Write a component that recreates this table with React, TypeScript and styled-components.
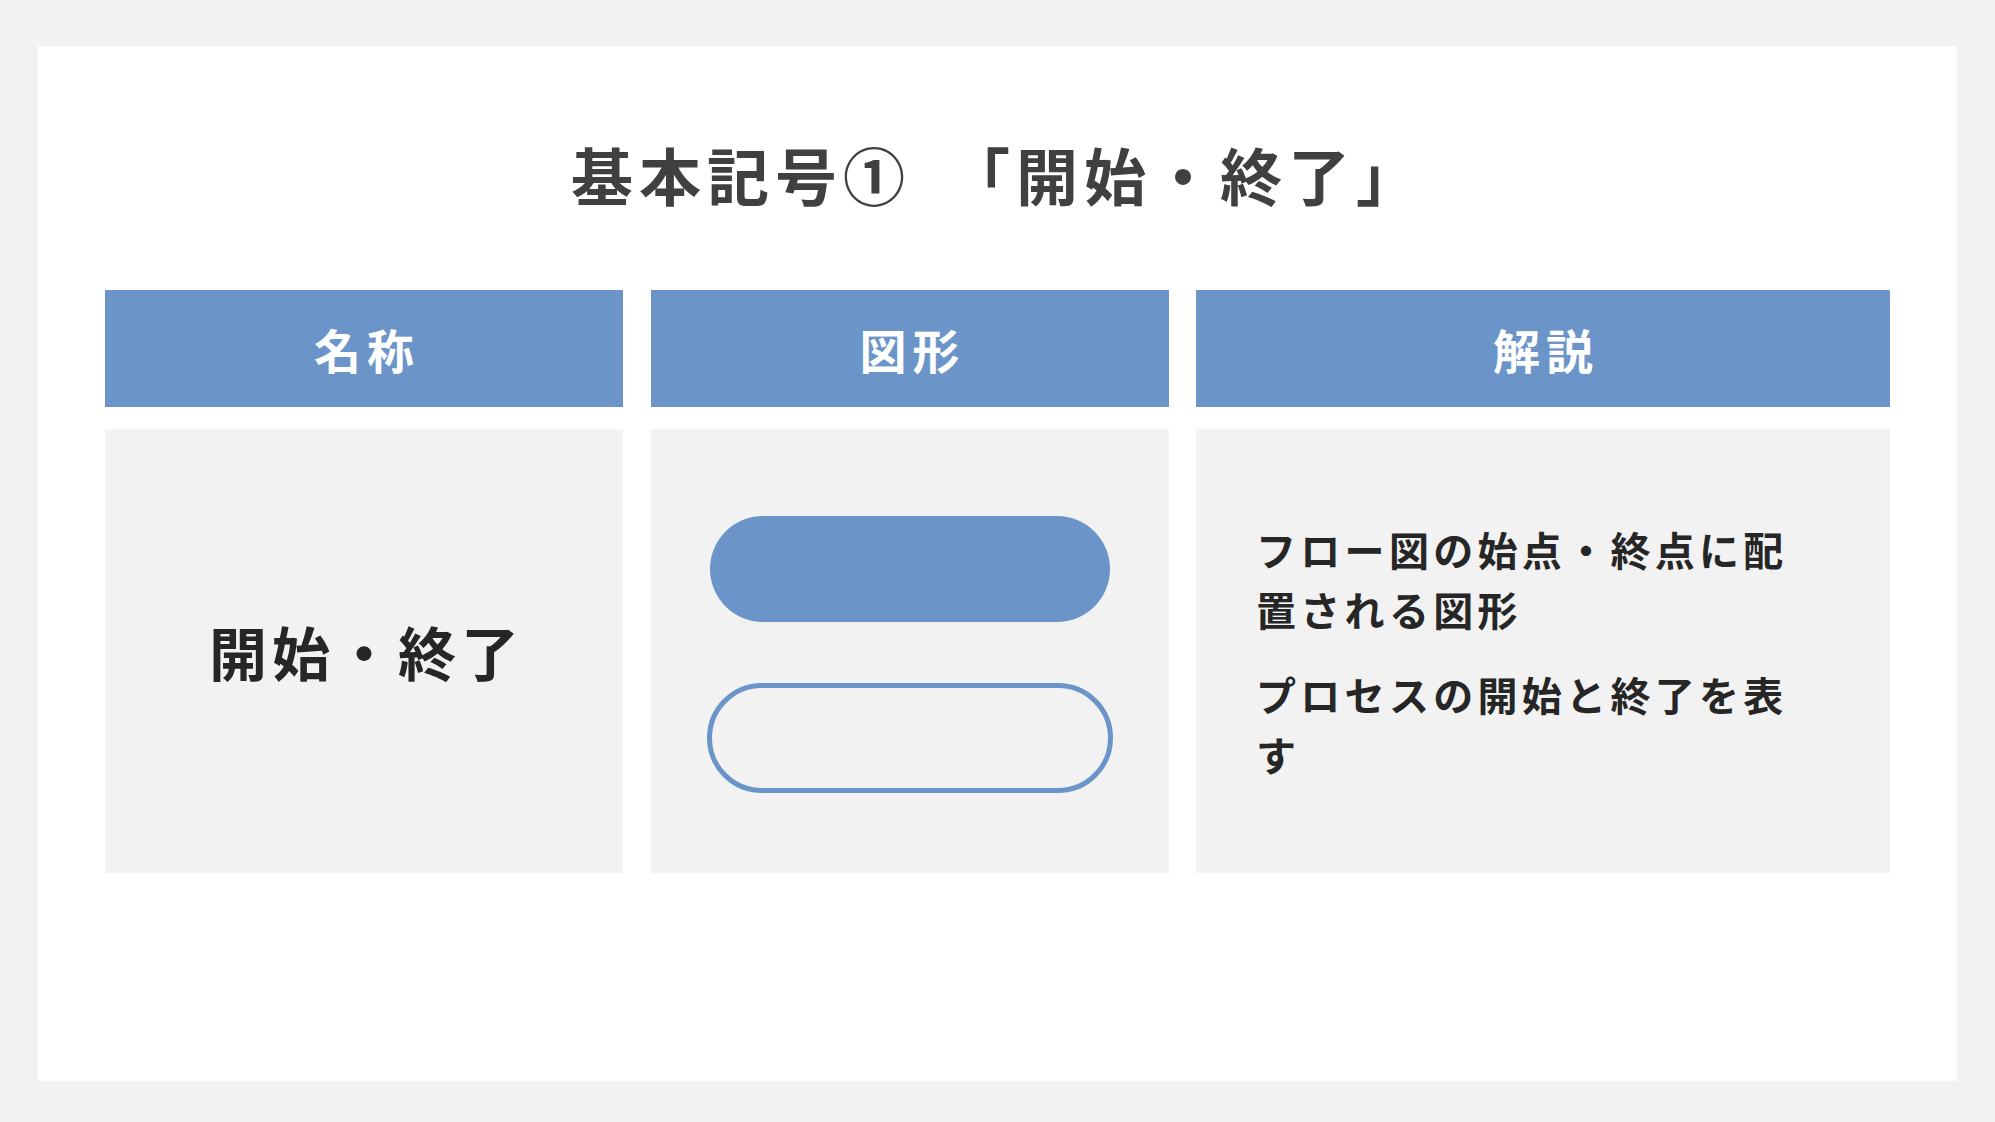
import React from "react";
import styled, { createGlobalStyle } from "styled-components";

const GlobalStyle = createGlobalStyle`
  html, body {
    margin: 0;
    padding: 0;
    background: #f2f2f2;
  }
  body {
    font-family: "Noto Sans CJK JP", "Noto Sans", sans-serif;
  }
`;

const Page = styled.div`
  width: 1995px;
  height: 1122px;
  padding: 46px 38px 41px;
  box-sizing: border-box;
  background: #f2f2f2;
`;

const Slide = styled.div`
  background: #ffffff;
  height: 100%;
  display: flex;
  flex-direction: column;
  align-items: center;
  padding-top: 88px;
  box-sizing: border-box;
`;

const Title = styled.h1`
  margin: 0;
  font-size: 62px;
  line-height: 80px;
  font-weight: 700;
  letter-spacing: 6px;
  color: #404040;
  white-space: pre;
`;

const Table = styled.div`
  margin-top: 76px;
  display: grid;
  grid-template-columns: 518px 518px 694px;
  grid-template-rows: 117px 444px;
  column-gap: 27.5px;
  row-gap: 22px;
`;

const HeadCell = styled.div`
  background: #6b95c9;
  color: #ffffff;
  display: flex;
  align-items: center;
  justify-content: center;
  font-size: 47px;
  font-weight: 700;
  letter-spacing: 6px;
  padding-left: 6px;
`;

const BodyCell = styled.div<{ $align?: "center" | "start"; $shift?: number }>`
  background: #f2f2f2;
  display: flex;
  flex-direction: column;
  align-items: ${(p) => (p.$align === "start" ? "flex-start" : "center")};
  justify-content: center;
  padding-left: ${(p) => (p.$align === "start" ? "60px" : "0")};
  padding-top: ${(p) => p.$shift ?? 0}px;
`;

const NameText = styled.div`
  font-size: 58px;
  font-weight: 700;
  letter-spacing: 5px;
  color: #262626;
  padding-left: 5px;
`;

const Pill = styled.div<{ $outline?: boolean }>`
  width: ${(p) => (p.$outline ? "406px" : "400px")};
  height: ${(p) => (p.$outline ? "110px" : "106px")};
  box-sizing: border-box;
  border-radius: 56px;
  background: ${(p) => (p.$outline ? "transparent" : "#6b95c9")};
  border: ${(p) => (p.$outline ? "5px solid #6b95c9" : "none")};
  & + & {
    margin-top: 61px;
  }
`;

const Desc = styled.p`
  margin: 0;
  width: 550px;
  font-size: 40px;
  line-height: 60px;
  font-weight: 700;
  letter-spacing: 4.3px;
  color: #262626;
  & + & {
    margin-top: 25px;
  }
`;

export default function App() {
  return (
    <>
      <GlobalStyle />
      <Page>
        <Slide>
          <Title>基本記号①　「開始・終了」</Title>
          <Table>
            <HeadCell>名称</HeadCell>
            <HeadCell>図形</HeadCell>
            <HeadCell>解説</HeadCell>
            <BodyCell>
              <NameText>開始・終了</NameText>
            </BodyCell>
            <BodyCell $shift={6}>
              <Pill />
              <Pill $outline />
            </BodyCell>
            <BodyCell $align="start">
              <Desc>フロー図の始点・終点に配置される図形</Desc>
              <Desc>プロセスの開始と終了を表す</Desc>
            </BodyCell>
          </Table>
        </Slide>
      </Page>
    </>
  );
}
